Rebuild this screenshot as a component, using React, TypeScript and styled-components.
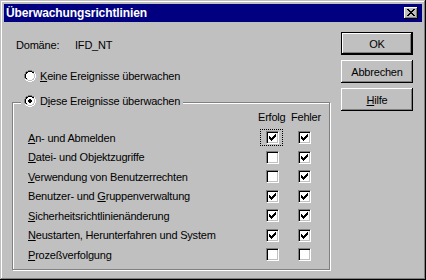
import React from 'react';
import styled, { createGlobalStyle } from 'styled-components';

const Global = createGlobalStyle`
  html, body { margin: 0; padding: 0; background: #c0c0c0; }
  body {
    font-family: "Liberation Sans", Arial, sans-serif;
    font-size: 11px;
    letter-spacing: -0.2px;
    color: #000;
  }
  * { box-sizing: border-box; }
  u { text-decoration: underline; text-underline-offset: 1px; }
`;

const Dialog = styled.div`
  width: 426px;
  height: 280px;
  background: #c0c0c0;
  padding: 4px;
  display: flex;
  flex-direction: column;
  box-shadow: inset -1px -1px #000, inset 1px 1px #c0c0c0,
    inset -2px -2px #808080, inset 2px 2px #fff;
`;

const TitleBar = styled.div`
  height: 18px;
  flex: none;
  background: #000080;
  display: flex;
  align-items: center;
  padding-left: 2px;
  padding-right: 4px;
`;

const TitleText = styled.div`
  flex: 1;
  color: #fff;
  font-weight: bold;
  font-size: 12px;
  letter-spacing: -0.1px;
`;

const CloseButton = styled.div`
  width: 14px;
  height: 12px;
  background: #c0c0c0;
  display: flex;
  align-items: center;
  justify-content: center;
  box-shadow: inset -1px -1px #000, inset 1px 1px #fff, inset -2px -2px #808080;
  padding-bottom: 1px;
`;

const Body = styled.div`
  flex: 1;
  display: flex;
`;

const LeftPanel = styled.div`
  width: 330px;
  padding-left: 8px;
  display: flex;
  flex-direction: column;
`;

const DomainRow = styled.div`
  margin: 16px 0 0 4px;
  height: 14px;
  display: flex;
  align-items: center;
`;

const DomainLabel = styled.span`
  width: 59px;
`;

const RadioRow = styled.div`
  margin: 17px 0 0 12px;
  height: 14px;
  display: flex;
  align-items: center;
  gap: 4px;
`;

const Group = styled.div`
  margin-top: 19px;
  width: 318px;
  border: 1px solid #808080;
  box-shadow: inset 1px 1px #fff, 1px 1px #fff;
  display: flex;
  flex-direction: column;
  padding-bottom: 4px;
`;

const Legend = styled.div`
  align-self: flex-start;
  margin: -9px 0 0 8px;
  padding: 0 3px;
  height: 14px;
  background: #c0c0c0;
  display: flex;
  align-items: center;
  gap: 4px;
`;

const EventGrid = styled.div`
  margin: 2px 0 0 15px;
  display: grid;
  grid-template-columns: 230px 33px 1fr;
  grid-template-rows: 18px repeat(7, 19.5px);
`;

const HeaderCell = styled.div`
  align-self: start;
  height: 14px;
  line-height: 14px;
`;

const RowLabel = styled.div`
  align-self: center;
  white-space: nowrap;
`;

const CheckCell = styled.div<{ $shift: number; $focused?: boolean }>`
  align-self: center;
  justify-self: start;
  margin-left: ${(p) => p.$shift}px;
  padding: 1px 3px 1px 5px;
  border: 1px dotted ${(p) => (p.$focused ? '#000' : 'transparent')};
  display: flex;
`;

const CheckBox = styled.div`
  width: 13px;
  height: 13px;
  background: #fff;
  border: 1px solid;
  border-color: #808080 #fff #fff #808080;
  box-shadow: inset 1px 1px #000, inset -1px -1px #c0c0c0;
  display: flex;
  align-items: center;
  justify-content: center;
`;

const RightPanel = styled.div`
  padding: 10px 0 0 7px;
  display: flex;
  flex-direction: column;
  gap: 5px;
`;

const Button = styled.div<{ $default?: boolean }>`
  width: 72px;
  height: 23px;
  display: flex;
  align-items: center;
  justify-content: center;
  background: #c0c0c0;
  border: ${(p) => (p.$default ? '1px solid #000' : 'none')};
  box-shadow: inset -1px -1px #000, inset 1px 1px #fff, inset -2px -2px #808080;
`;

const Pix = styled.svg`
  display: block;
  flex: none;
`;

type ColorMap = Record<string, string>;

const PixelArt: React.FC<{ rows: string[]; colors: ColorMap }> = ({ rows, colors }) => {
  const w = rows[0].length;
  const h = rows.length;
  const rects: React.ReactNode[] = [];
  rows.forEach((r, y) => {
    r.split('').forEach((c, x) => {
      if (colors[c]) rects.push(<rect key={`${x}-${y}`} x={x} y={y} width={1} height={1} fill={colors[c]} />);
    });
  });
  return (
    <Pix width={w} height={h} viewBox={`0 0 ${w} ${h}`} shapeRendering="crispEdges">
      {rects}
    </Pix>
  );
};

const palette: ColorMap = { D: '#808080', B: '#000', W: '#fff', L: '#c0c0c0', H: '#fff' };

const radioBase = [
  '....DDDD....',
  '..DDBBBBDD..',
  '.DBBWWWWBBH.',
  '.DBWWWWWWLH.',
  'DBWWWWWWWWLH',
  'DBWWWWWWWWLH',
  'DBWWWWWWWWLH',
  'DBWWWWWWWWLH',
  '.DBWWWWWWLH.',
  '.HLLWWWWLLH.',
  '..HHLLLLHH..',
  '....HHHH....',
];

const dot = ['.BB.', 'BBBB', 'BBBB', '.BB.'];

const radioChecked = radioBase.map((r, y) => {
  if (y < 4 || y > 7) return r;
  const d = dot[y - 4];
  return r.slice(0, 4) + d.split('').map((c, i) => (c === 'B' ? 'B' : r[4 + i])).join('') + r.slice(8);
});

const Radio: React.FC<{ checked?: boolean }> = ({ checked }) => (
  <PixelArt rows={checked ? radioChecked : radioBase} colors={palette} />
);

const checkMark = [
  '......B',
  '.....BB',
  'B...BBB',
  'BB.BBB.',
  'BBBBB..',
  '.BBB...',
  '..B....',
];

const closeGlyph = [
  'BB....BB',
  '.BB..BB.',
  '..BBBB..',
  '...BB...',
  '..BBBB..',
  '.BB..BB.',
  'BB....BB',
];

const Check: React.FC<{ checked: boolean }> = ({ checked }) => (
  <CheckBox>{checked && <PixelArt rows={checkMark} colors={palette} />}</CheckBox>
);

type EventRow = { pre: string; key: string; post: string; success: boolean; failure: boolean; focus?: boolean };

const events: EventRow[] = [
  { pre: '', key: 'A', post: 'n- und Abmelden', success: true, failure: true, focus: true },
  { pre: '', key: 'D', post: 'atei- und Objektzugriffe', success: false, failure: true },
  { pre: '', key: 'V', post: 'erwendung von Benutzerrechten', success: false, failure: true },
  { pre: 'Benutzer- und ', key: 'G', post: 'ruppenverwaltung', success: true, failure: true },
  { pre: '', key: 'S', post: 'icherheitsrichtlinienänderung', success: true, failure: true },
  { pre: '', key: 'N', post: 'eustarten, Herunterfahren und System', success: true, failure: true },
  { pre: '', key: 'P', post: 'rozeßverfolgung', success: false, failure: false },
];

export default function App() {
  return (
    <>
      <Global />
      <Dialog>
        <TitleBar>
          <TitleText>Überwachungsrichtlinien</TitleText>
          <CloseButton>
            <PixelArt rows={closeGlyph} colors={palette} />
          </CloseButton>
        </TitleBar>
        <Body>
          <LeftPanel>
            <DomainRow>
              <DomainLabel>Domäne:</DomainLabel>
              <span>IFD_NT</span>
            </DomainRow>
            <RadioRow>
              <Radio />
              <span>
                <u>K</u>eine Ereignisse überwachen
              </span>
            </RadioRow>
            <Group>
              <Legend>
                <Radio checked />
                <span>
                  D<u>i</u>ese Ereignisse überwachen
                </span>
              </Legend>
              <EventGrid>
                <div />
                <HeaderCell>Erfolg</HeaderCell>
                <HeaderCell>Fehler</HeaderCell>
                {events.map((e, i) => (
                  <React.Fragment key={i}>
                    <RowLabel>
                      {e.pre}
                      <u>{e.key}</u>
                      {e.post}
                    </RowLabel>
                    <CheckCell $shift={2} $focused={e.focus}>
                      <Check checked={e.success} />
                    </CheckCell>
                    <CheckCell $shift={1}>
                      <Check checked={e.failure} />
                    </CheckCell>
                  </React.Fragment>
                ))}
              </EventGrid>
            </Group>
          </LeftPanel>
          <RightPanel>
            <Button $default>OK</Button>
            <Button>Abbrechen</Button>
            <Button>
              <span>
                <u>H</u>ilfe
              </span>
            </Button>
          </RightPanel>
        </Body>
      </Dialog>
    </>
  );
}
